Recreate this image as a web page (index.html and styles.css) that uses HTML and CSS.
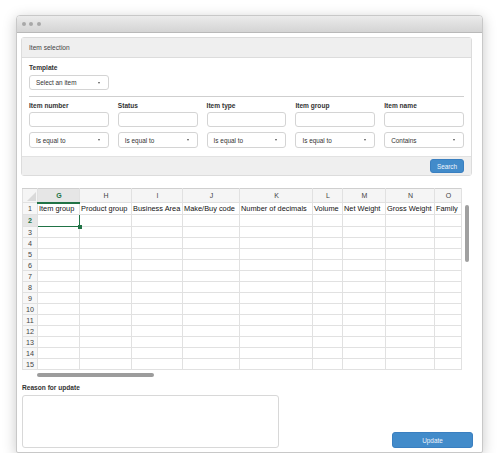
FILE: index.html
```html
<!DOCTYPE html>
<html>
<head>
<meta charset="utf-8">
<link rel="stylesheet" href="styles.css">
</head>
<body>
<div class="window">
  <div class="titlebar">
    <span class="dot"></span><span class="dot"></span><span class="dot"></span>
  </div>
  <div class="content">
    <div class="panel">
      <div class="panel-head">Item selection</div>
      <div class="panel-body">
        <div class="label">Template</div>
        <div class="select tpl"><span>Select an item</span><i class="caret"></i></div>
        <div class="rule"></div>
        <div class="fields">
          <div class="field">
            <div class="label">Item number</div>
            <div class="input"></div>
            <div class="select"><span>Is equal to</span><i class="caret"></i></div>
          </div>
          <div class="field">
            <div class="label">Status</div>
            <div class="input"></div>
            <div class="select"><span>Is equal to</span><i class="caret"></i></div>
          </div>
          <div class="field">
            <div class="label">Item type</div>
            <div class="input"></div>
            <div class="select"><span>Is equal to</span><i class="caret"></i></div>
          </div>
          <div class="field">
            <div class="label">Item group</div>
            <div class="input"></div>
            <div class="select"><span>Is equal to</span><i class="caret"></i></div>
          </div>
          <div class="field">
            <div class="label">Item name</div>
            <div class="input"></div>
            <div class="select"><span>Contains</span><i class="caret"></i></div>
          </div>
        </div>
      </div>
      <div class="panel-foot"><button class="btn search">Search</button></div>
    </div>

    <div class="sheet-wrap">
      <div class="sheet">
        <table>
          <colgroup>
            <col class="c-rn"><col class="c-g"><col class="c-h"><col class="c-i"><col class="c-j"><col class="c-k"><col class="c-l"><col class="c-m"><col class="c-n"><col class="c-o">
          </colgroup>
          <thead>
            <tr class="hdr">
              <th class="corner"><i class="tri"></i></th><th class="sel">G</th><th>H</th><th>I</th><th>J</th><th>K</th><th>L</th><th>M</th><th>N</th><th>O</th>
            </tr>
          </thead>
          <tbody>
            <tr class="r1"><td class="rn">1</td><td>Item group</td><td>Product group</td><td>Business Area</td><td>Make/Buy code</td><td>Number of decimals</td><td>Volume</td><td>Net Weight</td><td>Gross Weight</td><td>Family</td></tr>
            <tr class="r2"><td class="rn on">2</td><td class="active"><i class="handle"></i></td><td></td><td></td><td></td><td></td><td></td><td></td><td></td><td></td></tr>
            <tr><td class="rn">3</td><td></td><td></td><td></td><td></td><td></td><td></td><td></td><td></td><td></td></tr>
            <tr><td class="rn">4</td><td></td><td></td><td></td><td></td><td></td><td></td><td></td><td></td><td></td></tr>
            <tr><td class="rn">5</td><td></td><td></td><td></td><td></td><td></td><td></td><td></td><td></td><td></td></tr>
            <tr><td class="rn">6</td><td></td><td></td><td></td><td></td><td></td><td></td><td></td><td></td><td></td></tr>
            <tr><td class="rn">7</td><td></td><td></td><td></td><td></td><td></td><td></td><td></td><td></td><td></td></tr>
            <tr><td class="rn">8</td><td></td><td></td><td></td><td></td><td></td><td></td><td></td><td></td><td></td></tr>
            <tr><td class="rn">9</td><td></td><td></td><td></td><td></td><td></td><td></td><td></td><td></td><td></td></tr>
            <tr><td class="rn">10</td><td></td><td></td><td></td><td></td><td></td><td></td><td></td><td></td><td></td></tr>
            <tr><td class="rn">11</td><td></td><td></td><td></td><td></td><td></td><td></td><td></td><td></td><td></td></tr>
            <tr><td class="rn">12</td><td></td><td></td><td></td><td></td><td></td><td></td><td></td><td></td><td></td></tr>
            <tr><td class="rn">13</td><td></td><td></td><td></td><td></td><td></td><td></td><td></td><td></td><td></td></tr>
            <tr><td class="rn">14</td><td></td><td></td><td></td><td></td><td></td><td></td><td></td><td></td><td></td></tr>
            <tr><td class="rn">15</td><td></td><td></td><td></td><td></td><td></td><td></td><td></td><td></td><td></td></tr>
          </tbody>
        </table>
        <div class="hscroll"><div class="hthumb"></div></div>
      </div>
      <div class="vscroll"></div>
    </div>

    <div class="label reason">Reason for update</div>
    <div class="bottom">
      <div class="textarea"></div>
      <button class="btn update">Update</button>
    </div>
  </div>
</div>
</body>
</html>
```

FILE: styles.css
```css
* { box-sizing: border-box; }
html, body { margin: 0; padding: 0; background: #fff; }
body { font-family: "Liberation Sans", Arial, sans-serif; color: #333; }

.window {
  margin: 15px 0 0 16px;
  width: 467px;
  height: 438px;
  border: 1px solid #c8c8c8;
  border-radius: 4px 4px 2px 2px;
  box-shadow: 0 3px 14px rgba(0,0,0,0.22);
  background: #fff;
  overflow: hidden;
}
.titlebar {
  height: 17px;
  background: linear-gradient(#ebebeb, #d4d4d4);
  border-bottom: 1px solid #b9b9b9;
  display: flex;
  align-items: center;
  gap: 3.5px;
  padding-left: 4.5px;
}
.dot { width: 4px; height: 4px; border-radius: 50%; background: #a8a8a8; }

.content { padding: 4px 9px 0 4px; }

.panel {
  margin-right: 1px;
  border: 1px solid #dcdcdc;
  border-radius: 3px;
}
.panel-head {
  height: 20px;
  background: #efefef;
  border-bottom: 1px solid #dcdcdc;
  font-size: 6.6px;
  line-height: 19px;
  padding-left: 7px;
  color: #444;
}
.panel-body { padding: 5px 7px 8px 7px; }
.label { font-size: 6.6px; font-weight: bold; line-height: 9px; color: #333; }
.panel-body > .label { margin-bottom: 3px; }
.select, .input {
  height: 15px;
  border: 1px solid #d4d4d4;
  border-radius: 3px;
  background: #fff;
}
.select {
  display: flex;
  align-items: center;
  justify-content: space-between;
  padding: 0 6px;
  font-size: 6.4px;
  color: #333;
}
.tpl { width: 80px; }
.caret {
  width: 0; height: 0;
  border-left: 1.6px solid transparent;
  border-right: 1.6px solid transparent;
  border-top: 2px solid #555;
  margin-right: 2px;
}
.rule { height: 1px; background: #cfcfcf; margin: 6px 0 4px; }
.fields {
  display: grid;
  grid-template-columns: repeat(5, 1fr);
  column-gap: 9px;
}
.field .label { margin-bottom: 2px; }
.field .input { margin-bottom: 5px; }
.field .select { height: 16px; }

.panel-foot {
  height: 19px;
  background: #efefef;
  border-top: 1px solid #e2e2e2;
  display: flex;
  justify-content: flex-end;
  align-items: center;
  padding-right: 7px;
}
.btn {
  border: 1px solid #3a7fc0;
  background: #428bca;
  color: #eef4fb;
  font-family: "Liberation Sans", Arial, sans-serif;
  font-size: 6.4px;
  border-radius: 3px;
  padding: 0;
}
.search { width: 34px; height: 14px; }

.sheet-wrap { display: flex; margin-top: 12px; margin-left: 1px; }
.sheet { width: 439px; }
.vscroll {
  width: 4px; height: 57px;
  margin: 17px 0 0 4px;
  background: #a0a0a0;
  border-radius: 2px;
}
table {
  border-collapse: collapse;
  table-layout: fixed;
  width: 439px;
  font-family: "Liberation Sans", Arial, sans-serif;
  font-size: 7.4px;
  color: #111;
}
.c-rn { width: 15px; } .c-g { width: 42px; } .c-h { width: 52px; } .c-i { width: 51px; }
.c-j { width: 57px; } .c-k { width: 73px; } .c-l { width: 30px; } .c-m { width: 43px; }
.c-n { width: 49px; } .c-o { width: 27px; }
th, td {
  border: 1px solid #e1e1e1;
  padding: 0 0 0 1px;
  white-space: nowrap;
  overflow: hidden;
  height: 11px;
  line-height: 9px;
}
.hdr th {
  height: 14px;
  background: #f5f5f5;
  font-weight: normal;
  color: #444;
  font-size: 7px;
  border-top: 1px solid #cfcfcf;
  text-align: center;
}
.hdr th.sel {
  background: #e6e6e6;
  color: #217346;
  font-weight: bold;
  border-bottom: 2px solid #217346;
}
.corner { position: relative; }
.tri {
  position: absolute; right: 1px; bottom: 1px;
  width: 0; height: 0;
  border-left: 9px solid transparent;
  border-bottom: 9px solid #dadada;
}
.r1 td, .r2 td { height: 12px; }
.rn {
  background: #f7f7f7;
  color: #444;
  text-align: center;
  font-size: 7.2px;
  padding: 0;
}
.rn.on { color: #217346; font-weight: bold; background: #e6e6e6; }
td.active {
  border: 1.5px solid #217346;
  position: relative;
  overflow: visible;
}
.handle {
  position: absolute; right: -2.5px; bottom: -2.5px;
  width: 4px; height: 4px; background: #217346;
}
.hscroll { height: 8px; padding: 3px 0 0 15px; }
.hthumb { width: 117px; height: 3.5px; background: #9c9c9c; border-radius: 2px; }

.reason { margin: 5px 0 0 1px; }
.bottom {
  display: flex;
  justify-content: space-between;
  align-items: flex-end;
  margin: 3px 0 0 1px;
}
.textarea {
  width: 257px; height: 53px;
  border: 1px solid #d8d8d8;
  border-radius: 3px;
}
.update { width: 81px; height: 16px; }
```
